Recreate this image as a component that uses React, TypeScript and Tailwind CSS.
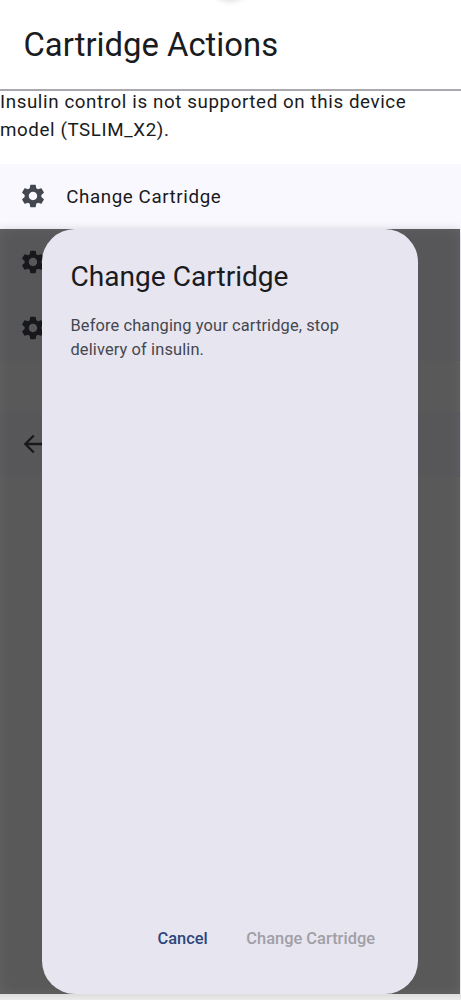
import type { ReactNode } from "react";
import { MdArrowBack, MdSettings } from "react-icons/md";

function Row({ icon, children }: { icon: ReactNode; children?: ReactNode }) {
  return (
    <div className="flex h-[65.7px] items-center gap-[19.5px] bg-[#f9f8ff] pl-[18.7px] text-[#1a1b21]">
      <span className="text-[28px] text-[#44474f]">{icon}</span>
      <span className="pt-px text-[18.75px] leading-7 tracking-[0.6px]">{children}</span>
    </div>
  );
}

function ChangeCartridgeDialog() {
  return (
    <div className="absolute inset-x-0 top-[229px] flex h-[765px] pr-px">
      <div className="flex w-full justify-center bg-[#000000a6] shadow-[0_2px_10px_rgba(0,0,0,0.2),inset_0_0_14px_rgba(255,255,255,0.07)]">
        <section
          role="dialog"
          aria-label="Change Cartridge"
          className="flex h-full w-[375.4px] flex-col rounded-[33px] bg-[#e7e5ef] px-[28.2px] pt-[29px] pb-[27px]"
        >
          <h2 className="text-[28.1px] leading-[38px] text-[#1a1b21]">Change Cartridge</h2>
          <p className="mt-[18px] text-[16.4px] leading-[23.5px] tracking-[0.13px] text-[#44474f]">
            Before changing your cartridge, stop
            <br />
            delivery of insulin.
          </p>
          <div className="mt-auto flex h-14 items-center justify-end gap-[38.5px] pr-[14.5px] text-[16.4px] font-medium tracking-[0.02px]">
            <button className="text-[#2c467c]">Cancel</button>
            <button disabled className="text-[#a09fa6]">Change Cartridge</button>
          </div>
        </section>
      </div>
    </div>
  );
}

export default function App() {
  return (
    <main className="relative h-[1000px] w-full overflow-hidden bg-white font-[Roboto,sans-serif] text-[#1a1b21]">
      <div className="absolute -top-[39px] left-[211px] size-[38px] rounded-full shadow-[0_1px_7px_rgba(0,0,0,0.2)]" />
      <header className="flex h-[91px] items-center border-b-2 border-[#aaa9b0] pl-[23.5px]">
        <h1 className="text-[32.85px] leading-[42px]">Cartridge Actions</h1>
      </header>
      <p className="-mt-[3px] h-[75.5px] text-[18.75px] leading-[28px] tracking-[0.6px]">
        Insulin control is not supported on this device
        <br />
        model (TSLIM_X2).
      </p>
      <Row icon={<MdSettings />}>Change Cartridge</Row>
      <Row icon={<MdSettings />} />
      <Row icon={<MdSettings />} />
      <div className="h-[51px]" />
      <Row icon={<MdArrowBack />} />
      <ChangeCartridgeDialog />
      <div className="absolute inset-x-0 bottom-0 h-1.5 bg-linear-to-b from-[#dddddd] to-[#ebebeb]" />
    </main>
  );
}
